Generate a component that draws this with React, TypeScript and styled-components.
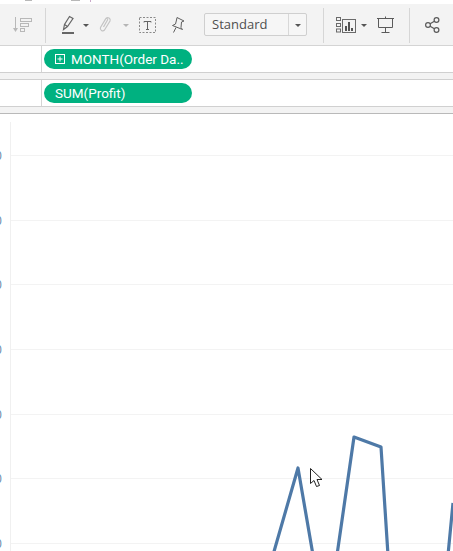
import styled, { createGlobalStyle } from "styled-components";

const GlobalStyle = createGlobalStyle`
  html, body { margin: 0; padding: 0; background: #fff; overflow: hidden; }
  body { font-family: "Open Sans", "Noto Sans", sans-serif; }
`;

const Page = styled.div`
  position: relative;
  width: 453px;
  height: 551px;
  overflow: hidden;
  background: #fff;
`;

const TopStrip = styled.div`
  display: flex;
  height: 4px;
  padding-left: 25px;
  align-items: flex-start;
`;

const Fragment = styled.span<{ $w: number; $h: number; $c: string; $ml: number }>`
  width: ${(p) => p.$w}px;
  height: ${(p) => p.$h}px;
  margin-left: ${(p) => p.$ml}px;
  background: ${(p) => p.$c};
`;

const Toolbar = styled.div`
  display: flex;
  align-items: center;
  height: 41px;
  background: #f3f3f3;
  border-bottom: 1px solid #d4d4d4;
`;

const Group = styled.div<{ $w: number; $pl: number }>`
  display: flex;
  align-items: center;
  width: ${(p) => p.$w}px;
  padding-left: ${(p) => p.$pl}px;
  box-sizing: border-box;
  height: 100%;
`;

const Divider = styled.div`
  width: 1px;
  height: 35px;
  margin-top: 2px;
  background: #d6d6d6;
  flex: none;
`;

const Caret = styled.span<{ $light?: boolean; $ml: number; $mr: number }>`
  width: 0;
  height: 0;
  flex: none;
  margin: 2px ${(p) => p.$mr}px 0 ${(p) => p.$ml}px;
  border-left: 3px solid transparent;
  border-right: 3px solid transparent;
  border-top: 3px solid ${(p) => (p.$light ? "#b5b5b5" : "#555")};
`;

const Spacer = styled.span<{ $w: number }>`
  width: ${(p) => p.$w}px;
  flex: none;
`;

const Select = styled.div`
  display: flex;
  align-items: stretch;
  width: 103px;
  height: 23px;
  margin-left: 19px;
  box-sizing: border-box;
  border: 1px solid #cfcfcf;
  border-radius: 2px;
  background: #f6f6f6;
`;

const SelectText = styled.div`
  flex: 1;
  padding-left: 7px;
  font-size: 13px;
  line-height: 20px;
  color: #4f4f4f;
`;

const SelectButton = styled.div`
  display: flex;
  align-items: center;
  justify-content: center;
  width: 17px;
  border-left: 1px solid #d8d8d8;
`;

const ShelfRow = styled.div`
  display: flex;
  height: 26px;
  background: #fff;
  border-bottom: 1px solid #d0d0d0;
`;

const ShelfLabel = styled.div`
  width: 41px;
  flex: none;
  border-right: 1px solid #d4d4d4;
`;

const Pill = styled.div`
  display: flex;
  align-items: center;
  gap: 6px;
  width: 148px;
  height: 20px;
  margin: 3px 0 0 2px;
  padding-left: 11px;
  box-sizing: border-box;
  border-radius: 10px;
  background: #00b180;
  color: #fff;
  font-family: Roboto, "Open Sans", sans-serif;
  font-size: 13.5px;
  white-space: nowrap;
`;

const PlusBox = styled.svg`
  flex: none;
`;

const ShelfGap = styled.div<{ $strong?: boolean }>`
  height: 6px;
  background: #f3f3f3;
  border-bottom: 1px solid ${(p) => (p.$strong ? "#b9b9b9" : "#d0d0d0")};
`;

const Chart = styled.svg`
  display: block;
  width: 453px;
  height: 437px;
`;

const Cursor = styled.svg`
  position: absolute;
  left: 310px;
  top: 468px;
`;

const gridY = [41, 106, 170, 235, 300, 364, 429];

function SortIcon() {
  return (
    <svg width="19" height="16" viewBox="0 0 19 16" fill="none" stroke="#b8b8b8">
      <path d="M2.500 0v11" />
      <path d="M0 11h5l-2.500 4z" fill="#b8b8b8" stroke="none" />
      <rect x="7.500" y="1.500" width="11" height="3" />
      <rect x="7.500" y="6.500" width="8" height="3" />
      <rect x="7.500" y="11.500" width="4" height="3" />
    </svg>
  );
}

function PenIcon() {
  return (
    <svg width="13" height="20" viewBox="0 0 13 20" fill="none" stroke="#666" strokeWidth="1.200">
      <path d="M1.500 14.500l1-5 5-8 3.500 2-5.500 8z" />
      <path d="M2.500 9.500l3 2" />
      <rect x="0" y="17" width="12" height="2" fill="#666" stroke="none" />
    </svg>
  );
}

function ClipIcon() {
  return (
    <svg width="13" height="17" viewBox="0 0 13 17" fill="none" stroke="#c4c4c4" strokeWidth="1.200">
      <path d="M3 9l4-6.500a2.400 2.400 0 0 1 4 2.500l-5.500 9a2.400 2.400 0 0 1-4-2.500l5-8.500a1 1 0 0 1 2 1l-4 7" />
    </svg>
  );
}

function TextBoxIcon() {
  return (
    <svg width="17" height="16" viewBox="0 0 17 16" fill="none" stroke="#8a8a8a">
      <rect x="0.500" y="0.500" width="16" height="15" strokeDasharray="2 1.500" />
      <path d="M5 5.500V4.500h7v1M8.500 4.500v8M7 12.500h3" stroke="#666" />
    </svg>
  );
}

function PinIcon() {
  return (
    <svg width="13" height="16" viewBox="0 0 13 16" fill="none" stroke="#5f5f5f" strokeLinejoin="round">
      <path d="M5 0.500L12 4 9.500 5 9 10.500 10.500 12.500 0.500 8.500 3.500 7 4.500 3z" />
      <path d="M4 10.500L1.500 15.500" />
    </svg>
  );
}

function VizIcon() {
  return (
    <svg width="20" height="16" viewBox="0 0 20 16" fill="none" stroke="#6a6a6a">
      <rect x="0.500" y="0.500" width="4" height="3" />
      <rect x="0.500" y="6.500" width="4" height="3" />
      <rect x="0.500" y="12" width="4" height="3" />
      <rect x="6.500" y="2.500" width="13" height="13" />
      <path d="M10 14V9M13 14V5M16 14v-3" strokeWidth="2" stroke="#555" />
    </svg>
  );
}

function PresentIcon() {
  return (
    <svg width="17" height="17" viewBox="0 0 17 17" fill="none" stroke="#5a5a5a">
      <path d="M0 2.500h17M1.500 2.500v9h14v-9M8.500 0.500v2M8.500 11.500v5M4.500 16.500h8" />
    </svg>
  );
}

function ShareIcon() {
  return (
    <svg width="15" height="16" viewBox="0 0 15 16" fill="none" stroke="#5a5a5a" strokeWidth="1.200">
      <circle cx="11.500" cy="3" r="2.400" />
      <circle cx="3" cy="8" r="2.400" />
      <circle cx="11.500" cy="13" r="2.400" />
      <path d="M5.100 6.800l4.300-2.600M5.100 9.200l4.300 2.600" />
    </svg>
  );
}

export default function App() {
  return (
    <Page>
      <GlobalStyle />
      <TopStrip>
        <Fragment $w={7} $h={1} $c="#b8b8b8" $ml={0} />
        <Fragment $w={9} $h={1} $c="#b8b8b8" $ml={39} />
        <Fragment $w={1} $h={2} $c="#c9a9c9" $ml={10} />
      </TopStrip>
      <Toolbar>
        <Group $w={45} $pl={13}>
          <SortIcon />
        </Group>
        <Divider />
        <Group $w={277} $pl={16}>
          <PenIcon />
          <Caret $ml={8} $mr={10} />
          <ClipIcon />
          <Caret $light $ml={11} $mr={10} />
          <TextBoxIcon />
          <Spacer $w={16} />
          <PinIcon />
          <Select>
            <SelectText>Standard</SelectText>
            <SelectButton>
              <Caret $ml={0} $mr={0} />
            </SelectButton>
          </Select>
        </Group>
        <Divider />
        <Group $w={85} $pl={12}>
          <VizIcon />
          <Caret $ml={5} $mr={10} />
          <PresentIcon />
        </Group>
        <Divider />
        <Group $w={43} $pl={15}>
          <ShareIcon />
        </Group>
      </Toolbar>
      <ShelfRow>
        <ShelfLabel />
        <Pill>
          <PlusBox width="10" height="10" viewBox="0 0 10 10" fill="none" stroke="#fff">
            <rect x="0.500" y="0.500" width="9" height="9" />
            <path d="M5 2.500v5M2.500 5h5" />
          </PlusBox>
          MONTH(Order Da..
        </Pill>
      </ShelfRow>
      <ShelfGap />
      <ShelfRow>
        <ShelfLabel />
        <Pill>SUM(Profit)</Pill>
      </ShelfRow>
      <ShelfGap $strong />
      <Chart viewBox="0 0 453 437">
        <rect x="10" y="8" width="1" height="429" fill="#f0f0f0" />
        {gridY.map((y) => (
          <g key={y}>
            <rect x="11" y={y} width="442" height="1" fill="#f3f3f3" />
            <text x="-5" y={y + 5} fontSize="12" fill="#5f87a8" fontFamily="Open Sans, sans-serif">
              0
            </text>
          </g>
        ))}
        <path
          d="M273 441L298 354L313 441M337 441L354 323L381 333L388 441M448 441L453 389"
          fill="none"
          stroke="#4e79a7"
          strokeWidth="3.200"
          strokeLinejoin="round"
        />
      </Chart>
      <Cursor width="13" height="20" viewBox="0 0 13 20">
        <path d="M0.500 0.500v15l3.500-3 2.500 6 3-1-2.500-6h5z" fill="#fff" stroke="#222" />
      </Cursor>
    </Page>
  );
}
